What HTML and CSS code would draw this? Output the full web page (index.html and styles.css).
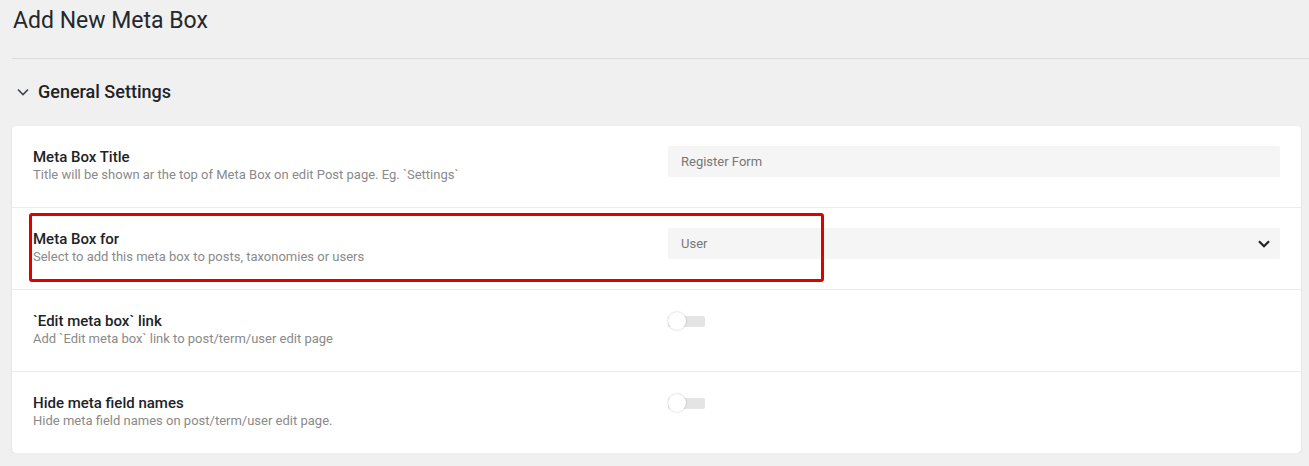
FILE: index.html
```html
<!DOCTYPE html>
<html lang="en">
<head>
  <meta charset="UTF-8">
  <meta name="viewport" content="width=device-width, initial-scale=1.0">
  <title>Add New Meta Box</title>
  <link rel="stylesheet" href="styles.css">
</head>
<body>
  <div class="wrap">
    <div class="page-header">
      <h1>Add New Meta Box</h1>
    </div>

    <div class="section-title">
      <svg class="chevron" width="12" height="8" viewBox="0 0 12 8"><path d="M1 1.5 L6 6.5 L11 1.5" fill="none" stroke="#3c434a" stroke-width="1.6"/></svg>
      <h2>General Settings</h2>
    </div>

    <div class="card">
      <div class="row">
        <div class="info">
          <div class="label">Meta Box Title</div>
          <div class="desc">Title will be shown ar the top of Meta Box on edit Post page. Eg. `Settings`</div>
        </div>
        <div class="control">
          <input type="text" class="field" value="Register Form">
        </div>
      </div>

      <div class="row">
        <div class="info">
          <div class="label">Meta Box for</div>
          <div class="desc">Select to add this meta box to posts, taxonomies or users</div>
        </div>
        <div class="control">
          <div class="field select">
            <span>User</span>
            <svg width="12" height="8" viewBox="0 0 12 8"><path d="M1 1.2 L6 6.2 L11 1.2" fill="none" stroke="#1d2327" stroke-width="2.2"/></svg>
          </div>
        </div>
        <div class="highlight"></div>
      </div>

      <div class="row">
        <div class="info">
          <div class="label">`Edit meta box` link</div>
          <div class="desc">Add `Edit meta box` link to post/term/user edit page</div>
        </div>
        <div class="control">
          <span class="toggle"><span class="knob"></span></span>
        </div>
      </div>

      <div class="row">
        <div class="info">
          <div class="label">Hide meta field names</div>
          <div class="desc">Hide meta field names on post/term/user edit page.</div>
        </div>
        <div class="control">
          <span class="toggle"><span class="knob"></span></span>
        </div>
      </div>
    </div>
  </div>
</body>
</html>
```

FILE: styles.css
```css
body {
  margin: 0;
  background-color: #f0f0f0;
  font-family: Roboto, 'Noto Sans', sans-serif;
  color: #1d2327;
}

.wrap {
  padding-left: 12px;
}

.page-header {
  padding: 6px 0 22px 1px;
  border-bottom: 1px solid #dcdcdc;
}

h1 {
  margin: 0;
  font-size: 23px;
  font-weight: 400;
  line-height: 30px;
  color: #23282d;
}

.section-title {
  display: flex;
  align-items: center;
  gap: 9px;
  margin: 21px 0 22px 5px;
}

.section-title h2 {
  margin: 0;
  font-size: 18px;
  font-weight: 500;
  line-height: 24px;
  color: #1d2327;
}

.card {
  margin-right: 8px;
  background: #ffffff;
  border-radius: 4px;
  box-shadow: 0 1px 2px rgba(0, 0, 0, 0.12);
}

.row {
  position: relative;
  display: grid;
  grid-template-columns: 1fr 612px;
  padding: 20px 21px 23px;
}

.row + .row {
  border-top: 1px solid #ebebeb;
}

.label {
  margin-top: 2px;
  font-size: 15px;
  font-weight: 500;
  line-height: 18px;
  color: #1d2327;
}

.desc {
  font-size: 13px;
  line-height: 18px;
  color: #8a8a8a;
}

.control {
  height: 31px;
}

.field {
  box-sizing: border-box;
  width: 100%;
  height: 31px;
  padding: 0 10px 0 13px;
  border: none;
  border-radius: 2px;
  background: #f5f5f5;
  font-family: Roboto, sans-serif;
  font-size: 13px;
  color: #777;
  outline: none;
}

.select {
  display: flex;
  align-items: center;
  justify-content: space-between;
}

.toggle {
  position: relative;
  display: block;
  width: 37px;
  height: 11px;
  margin-top: 6px;
  border-radius: 2px;
  background: #e4e4e4;
}

.knob {
  position: absolute;
  left: 0;
  top: -4px;
  width: 18px;
  height: 18px;
  border-radius: 50%;
  background: #ffffff;
  box-shadow: 0 0 2px rgba(0, 0, 0, 0.25);
}

.highlight {
  position: absolute;
  left: 17px;
  top: 5px;
  width: 795px;
  height: 69px;
  box-sizing: border-box;
  border: 3px solid #e00000;
  border-radius: 3px;
  pointer-events: none;
}
```
